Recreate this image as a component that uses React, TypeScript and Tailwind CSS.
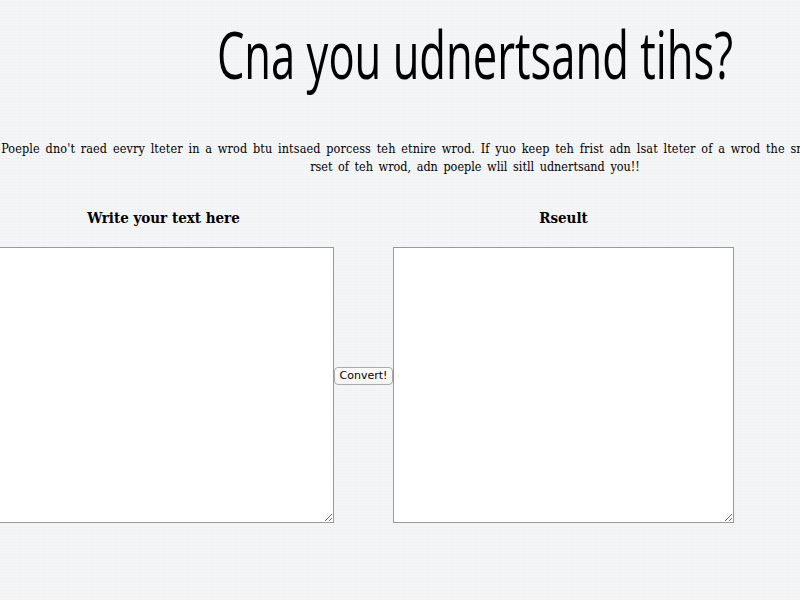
import React from "react";

export default function App() {
  return (
    <div className="h-screen w-screen overflow-hidden bg-[#f5f6f7] bg-[repeating-linear-gradient(0deg,#f1f2f3_0px,#f1f2f3_1px,transparent_1px,transparent_3px),repeating-linear-gradient(90deg,#f2f3f4_0px,#f2f3f4_1px,transparent_1px,transparent_3px)]">
      <div className="w-[950px]">
        <div className="flex h-[98px] justify-center pt-[13px]">
          <h1 className="inline-block whitespace-nowrap font-['Open_Sans',sans-serif] text-[66px] leading-[80px] font-normal text-black scale-x-[0.66]">
            Cna you udnertsand tihs?
          </h1>
        </div>
        <p className="mt-[42px] text-center font-['DejaVu_Serif_Condensed','DejaVu_Serif',serif] text-[12.5px] leading-[18px] text-black whitespace-nowrap [word-spacing:2px]">
          <span className="tracking-[0.13px]">
            Poeple dno't raed eevry lteter in a wrod btu intsaed porcess teh etnire wrod. If yuo keep teh frist adn lsat lteter of a wrod the smae, you can mix up the
          </span>
          <br />
          rset of teh wrod, adn poeple wlil sitll udnertsand you!!
        </p>
        <div className="mt-[34px] flex -ml-[7px]">
          <div className="flex w-[341px] flex-col items-center">
            <h2 className="h-[37px] font-['DejaVu_Serif_Condensed','DejaVu_Serif',serif] text-[15px] leading-[16px] font-bold text-black">
              Write your text here
            </h2>
            <textarea className="h-[276px] w-[341px] resize border border-[#999] bg-white" />
          </div>
          <div className="flex w-[59px] items-center justify-center pt-[19px]">
            <button className="h-[18px] rounded-[4px] border border-[#aaa] bg-gradient-to-b from-white to-[#f3f3f3] px-[5px] font-['DejaVu_Sans','Liberation_Sans',sans-serif] text-[11px] leading-[16px] text-black">
              Convert!
            </button>
          </div>
          <div className="flex w-[341px] flex-col items-center">
            <h2 className="h-[37px] font-['DejaVu_Serif_Condensed','DejaVu_Serif',serif] text-[15px] leading-[16px] font-bold text-black">
              Rseult
            </h2>
            <textarea className="h-[276px] w-[341px] resize border border-[#999] bg-white" />
          </div>
        </div>
      </div>
    </div>
  );
}
